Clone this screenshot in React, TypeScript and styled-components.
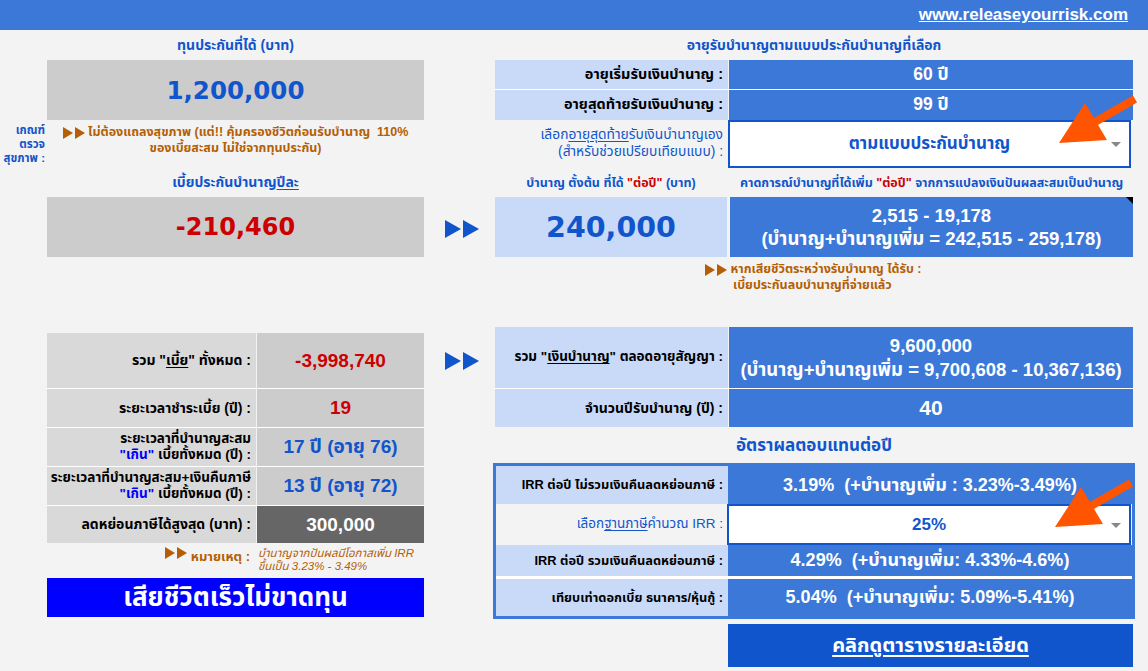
import React from "react";
import styled, { createGlobalStyle } from "styled-components";

const Global = createGlobalStyle`
  html, body { margin: 0; padding: 0; background: #f3f3f3; }
  body { font-family: "Liberation Sans", "Noto Sans Thai", "Noto Sans", Tahoma, sans-serif; }
  * { box-sizing: border-box; }
`;

const NARROW = `"Liberation Sans Narrow", "Liberation Sans", "Noto Sans Thai", "Noto Sans", sans-serif`;

const C = {
  page: "#f3f3f3",
  blue: "#3c78d8",
  light: "#c9daf8",
  ink: "#1155cc",
  red: "#cc0000",
  orange: "#b45f06",
  gray: "#cccccc",
  gray2: "#d9d9d9",
  dark: "#666666",
};

const Page = styled.div`
  position: relative;
  width: 1148px;
  height: 671px;
  overflow: hidden;
  background: ${C.page};
`;

const TopBar = styled.div`
  height: 30px;
  background: ${C.blue};
  display: flex;
  align-items: center;
  justify-content: flex-end;
  padding-right: 20px;
`;

const SiteLink = styled.a`
  color: #fff;
  font-family: ${NARROW};
  font-weight: bold;
  font-size: 17px;
  text-decoration: underline;
`;

const Cols = styled.div<{ $rows?: string }>`
  display: grid;
  grid-template-columns: 47px 377px 71px 638px;
  ${(p) => (p.$rows ? `grid-template-rows: ${p.$rows};` : "")}
`;

const Cell = styled.div<{ $col: string; $row?: string }>`
  grid-column: ${(p) => p.$col};
  ${(p) => (p.$row ? `grid-row: ${p.$row};` : "")}
  min-width: 0;
`;

const Title = styled.div<{ $size?: number }>`
  height: 100%;
  display: flex;
  align-items: flex-end;
  justify-content: center;
  padding-bottom: 4px;
  color: ${C.ink};
  font-weight: bold;
  font-size: ${(p) => p.$size ?? 14}px;
  white-space: nowrap;
  u { text-underline-offset: 2px; }
`;

const BigBox = styled.div<{ $color: string; $bg: string; $size?: number }>`
  height: 100%;
  background: ${(p) => p.$bg};
  color: ${(p) => p.$color};
  display: flex;
  align-items: center;
  justify-content: center;
  font-family: "DejaVu Sans", "Liberation Sans", sans-serif;
  font-weight: bold;
  font-size: ${(p) => p.$size ?? 24.5}px;
`;

const SideLabel = styled.div`
  padding: 3px 2px 0 0;
  text-align: right;
  color: ${C.ink};
  font-size: 11.5px;
  font-weight: bold;
  line-height: 14px;
`;

const Note = styled.div<{ $align?: string }>`
  color: ${C.orange};
  font-size: 12.5px;
  font-weight: bold;
  line-height: 16px;
  text-align: ${(p) => p.$align ?? "center"};
  padding-top: 4px;
`;

const RowTable = styled.div<{ $cols: string; $gap?: number }>`
  display: grid;
  grid-template-columns: ${(p) => p.$cols};
  column-gap: ${(p) => p.$gap ?? 1}px;
`;

const Label = styled.div<{ $h: number; $bg?: string; $color?: string; $size?: number; $line?: boolean; $weight?: string }>`
  height: ${(p) => p.$h}px;
  background: ${(p) => p.$bg ?? C.light};
  color: ${(p) => p.$color ?? "#000"};
  font-family: ${NARROW};
  font-weight: ${(p) => p.$weight ?? "bold"};
  font-size: ${(p) => p.$size ?? 14}px;
  line-height: 1.2;
  white-space: nowrap;
  display: flex;
  align-items: center;
  justify-content: flex-end;
  text-align: right;
  padding-right: 5px;
  border-bottom: ${(p) => (p.$line ? "1px solid #fff" : "none")};
  u { text-underline-offset: 2px; }
`;

const Value = styled.div<{ $h: number; $bg?: string; $color?: string; $size?: number; $line?: boolean; $narrow?: boolean }>`
  position: relative;
  height: ${(p) => p.$h}px;
  background: ${(p) => p.$bg ?? C.blue};
  color: ${(p) => p.$color ?? "#fff"};
  font-family: ${(p) => (p.$narrow ? NARROW : `"Liberation Sans", "Noto Sans Thai", sans-serif`)};
  font-weight: bold;
  font-size: ${(p) => p.$size ?? 17}px;
  line-height: 1.25;
  display: flex;
  flex-direction: column;
  align-items: center;
  justify-content: center;
  text-align: center;
  white-space: nowrap;
  border-bottom: ${(p) => (p.$line ? "1px solid #fff" : "none")};
`;

const CommentMark = styled.span`
  position: absolute;
  top: 0;
  right: 0;
  width: 0;
  height: 0;
  border-top: 7px solid #000;
  border-left: 7px solid transparent;
`;

const Select = styled.div<{ $h: number }>`
  position: relative;
  height: ${(p) => p.$h}px;
  background: #fff;
  border: 2px solid ${C.ink};
  color: ${C.ink};
  font-weight: bold;
  font-size: 17px;
  display: flex;
  align-items: center;
  justify-content: center;
`;

const Caret = styled.span`
  position: absolute;
  right: 8px;
  top: 50%;
  margin-top: -2px;
  width: 0;
  height: 0;
  border-left: 5px solid transparent;
  border-right: 5px solid transparent;
  border-top: 5px solid #888;
`;

const ArrowCol = styled.div<{ $pt: number }>`
  display: flex;
  justify-content: flex-end;
  padding: ${(p) => p.$pt}px 16px 0 0;
`;

const HeaderPair = styled.div`
  height: 100%;
  display: grid;
  grid-template-columns: 232px 403px;
  column-gap: 3px;
`;

const Red = styled.span`
  color: ${C.red};
`;
const Emph = styled.span`
  color: #0000ff;
`;

const LeftStack = styled.div`
  padding-top: 6px;
  display: flex;
  flex-direction: column;
`;

const RightStack = styled.div`
  display: flex;
  flex-direction: column;
`;

const Remark = styled.div`
  height: 35px;
  display: grid;
  grid-template-columns: 209px 168px;
  color: ${C.orange};
  padding-top: 4px;
`;

const RemarkHead = styled.div`
  display: flex;
  justify-content: flex-end;
  align-items: flex-start;
  gap: 4px;
  font-weight: bold;
  font-size: 13px;
  padding-right: 6px;
`;

const RemarkText = styled.div`
  font-style: italic;
  font-size: 11.5px;
  line-height: 13px;
  padding-left: 2px;
`;

const DeathButton = styled.div`
  height: 39px;
  background: #0000ff;
  color: #fff;
  font-weight: bold;
  font-size: 26px;
  display: flex;
  align-items: center;
  justify-content: center;
`;

const IrrBox = styled.div`
  border: 3px solid ${C.blue};
  margin-left: -2px;
  margin-right: -2px;
  display: grid;
  grid-template-columns: 232px 404px;
  background: ${C.page};
`;

const WhiteRule = styled.div`
  grid-column: 1 / -1;
  height: 3px;
  background: #fff;
`;

const DetailButton = styled.div`
  margin: 5px 0 0 233px;
  height: 43px;
  background: ${C.ink};
  color: #fff;
  font-weight: bold;
  font-size: 20px;
  text-decoration: underline;
  text-underline-offset: 3px;
  display: flex;
  align-items: center;
  justify-content: center;
`;

const Overlay = styled.svg<{ $x: number; $y: number }>`
  position: absolute;
  left: ${(p) => p.$x}px;
  top: ${(p) => p.$y}px;
`;

function PlayPair({ color, w, h }: { color: string; w: number; h: number }) {
  return (
    <svg width={w * 2 + 2} height={h} viewBox={`0 0 ${w * 2 + 2} ${h}`} style={{ display: "inline-block", verticalAlign: "middle", flex: "none" }}>
      <polygon points={`0,0 ${w},${h / 2} 0,${h}`} fill={color} />
      <polygon points={`${w + 2},0 ${w * 2 + 2},${h / 2} ${w + 2},${h}`} fill={color} />
    </svg>
  );
}

function OrangeArrow({ x, y }: { x: number; y: number }) {
  return (
    <Overlay $x={x} $y={y} width={90} height={60} viewBox="0 0 90 60">
      <line x1={80} y1={7} x2={40} y2={30} stroke="#ff5500" strokeWidth={8} />
      <polygon points="4,51 30,11 52,48" fill="#ff5500" />
    </Overlay>
  );
}

export default function App() {
  return (
    <Page>
      <Global />
      <TopBar>
        <SiteLink>www.releaseyourrisk.com</SiteLink>
      </TopBar>

      <Cols $rows="30px 60px 50px 27px 60px 40px">
        <Cell $col="2" $row="1">
          <Title>ทุนประกันที่ได้ (บาท)</Title>
        </Cell>
        <Cell $col="4" $row="1">
          <Title>อายุรับบำนาญตามแบบประกันบำนาญที่เลือก</Title>
        </Cell>

        <Cell $col="2" $row="2">
          <BigBox $bg={C.gray} $color={C.ink}>1,200,000</BigBox>
        </Cell>
        <Cell $col="4" $row="2 / 4">
          <RowTable $cols="233px 404px">
            <Label $h={30} $line $size={14.5}>อายุเริ่มรับเงินบำนาญ :</Label>
            <Value $h={30} $line $size={17.5}>60 ปี</Value>
            <Label $h={30} $size={14.5}>อายุสุดท้ายรับเงินบำนาญ :</Label>
            <Value $h={30} $size={17.5}>99 ปี</Value>
          </RowTable>
          <RowTable $cols="233px 403px" $gap={0}>
            <Label $h={48} $bg="transparent" $color={C.ink} $size={13.8} $weight="normal">
              <span>
                เลือก<u>อายุสุดท้าย</u>รับเงินบำนาญเอง
                <br />
                (สำหรับช่วยเปรียบเทียบแบบ) :
              </span>
            </Label>
            <Select $h={48}>
              ตามแบบประกันบำนาญ
              <Caret />
            </Select>
          </RowTable>
        </Cell>

        <Cell $col="1" $row="3">
          <SideLabel>
            เกณฑ์
            <br />
            ตรวจ
            <br />
            สุขภาพ :
          </SideLabel>
        </Cell>
        <Cell $col="2" $row="3">
          <Note>
            <PlayPair color={C.orange} w={10} h={12} /> ไม่ต้องแถลงสุขภาพ (แต่!! คุ้มครองชีวิตก่อนรับบำนาญ&nbsp; 110%
            <br />
            ของเบี้ยสะสม ไม่ใช่จากทุนประกัน)
          </Note>
        </Cell>

        <Cell $col="2" $row="4">
          <Title>
            เบี้ยประกันบำนาญ<u>ปีละ</u>
          </Title>
        </Cell>
        <Cell $col="4" $row="4">
          <HeaderPair>
            <Title $size={12.5}>
              บำนาญ ตั้งต้น ที่ได้&nbsp;<Red>"ต่อปี"</Red>&nbsp;(บาท)
            </Title>
            <Title $size={12.5}>
              คาดการณ์บำนาญที่ได้เพิ่ม&nbsp;<Red>"ต่อปี"</Red>&nbsp;จากการแปลงเงินปันผลสะสมเป็นบำนาญ
            </Title>
          </HeaderPair>
        </Cell>

        <Cell $col="2" $row="5">
          <BigBox $bg={C.gray} $color={C.red} $size={24}>
            -210,460
          </BigBox>
        </Cell>
        <Cell $col="3" $row="5">
          <ArrowCol $pt={23}>
            <PlayPair color={C.ink} w={16} h={18} />
          </ArrowCol>
        </Cell>
        <Cell $col="4" $row="5">
          <HeaderPair>
            <BigBox $bg={C.light} $color={C.ink} $size={28.5}>
              240,000
            </BigBox>
            <Value $h={60} $narrow $size={18.5}>
              <CommentMark />
              <div>2,515 - 19,178</div>
              <div>(บำนาญ+บำนาญเพิ่ม = 242,515 - 259,178)</div>
            </Value>
          </HeaderPair>
        </Cell>

        <Cell $col="4" $row="6">
          <Note $align="left" style={{ paddingLeft: 210, fontSize: 12.5 }}>
            <PlayPair color={C.orange} w={10} h={12} /> หากเสียชีวิตระหว่างรับบำนาญ ได้รับ :
            <br />
            <span style={{ paddingLeft: 28 }}>เบี้ยประกันลบบำนาญที่จ่ายแล้ว</span>
          </Note>
        </Cell>
      </Cols>

      <Cols style={{ marginTop: 30 }}>
        <Cell $col="2">
          <LeftStack>
            <RowTable $cols="209px 167px">
              <Label $h={56} $bg={C.gray2} $line>
                <span>
                  รวม "<u>เบี้ย</u>" ทั้งหมด :
                </span>
              </Label>
              <Value $h={56} $bg={C.gray} $color={C.red} $size={19} $line>
                -3,998,740
              </Value>
              <Label $h={39} $bg={C.gray2} $line>
                ระยะเวลาชำระเบี้ย (ปี) :
              </Label>
              <Value $h={39} $bg={C.gray} $color={C.red} $size={19} $line>
                19
              </Value>
              <Label $h={39} $bg={C.gray2} $line $size={13.5}>
                <span>
                  ระยะเวลาที่บำนาญสะสม
                  <br />
                  <Emph>"เกิน"</Emph> เบี้ยทั้งหมด (ปี) :
                </span>
              </Label>
              <Value $h={39} $bg={C.gray} $color={C.ink} $size={19} $line>
                17 ปี (อายุ 76)
              </Value>
              <Label $h={39} $bg={C.gray2} $line $size={13.5}>
                <span>
                  ระยะเวลาที่บำนาญสะสม+เงินคืนภาษี
                  <br />
                  <Emph>"เกิน"</Emph> เบี้ยทั้งหมด (ปี) :
                </span>
              </Label>
              <Value $h={39} $bg={C.gray} $color={C.ink} $size={19} $line>
                13 ปี (อายุ 72)
              </Value>
              <Label $h={37} $bg={C.gray2}>
                ลดหย่อนภาษีได้สูงสุด (บาท) :
              </Label>
              <Value $h={37} $bg={C.dark} $size={19}>
                300,000
              </Value>
            </RowTable>
            <Remark>
              <RemarkHead>
                <PlayPair color={C.orange} w={10} h={12} />
                หมายเหตุ :
              </RemarkHead>
              <RemarkText>
                บำนาญจากปันผลมีโอกาสเพิ่ม IRR
                <br />
                ขึ้นเป็น 3.23% - 3.49%
              </RemarkText>
            </Remark>
            <DeathButton>เสียชีวิตเร็วไม่ขาดทุน</DeathButton>
          </LeftStack>
        </Cell>

        <Cell $col="3">
          <ArrowCol $pt={25}>
            <PlayPair color={C.ink} w={16} h={18} />
          </ArrowCol>
        </Cell>

        <Cell $col="4">
          <RightStack>
            <RowTable $cols="233px 404px">
              <Label $h={62} $line $size={13.5}>
                <span>
                  รวม "<u>เงินบำนาญ</u>" ตลอดอายุสัญญา :
                </span>
              </Label>
              <Value $h={62} $line $narrow $size={18.5}>
                <div>9,600,000</div>
                <div>(บำนาญ+บำนาญเพิ่ม = 9,700,608 - 10,367,136)</div>
              </Value>
              <Label $h={38} $size={14}>
                จำนวนปีรับบำนาญ (ปี) :
              </Label>
              <Value $h={38} $size={21}>
                40
              </Value>
            </RowTable>
            <div style={{ height: 36 }}>
              <Title $size={17}>อัตราผลตอบแทนต่อปี</Title>
            </div>
            <IrrBox>
              <Label $h={38} $size={12.8}>
                IRR ต่อปี ไม่รวมเงินคืนลดหย่อนภาษี :
              </Label>
              <Value $h={38} $size={18}>
                3.19%&nbsp; (+บำนาญเพิ่ม : 3.23%-3.49%)
              </Value>
              <Label $h={41} $bg="transparent" $color={C.ink} $size={13.5} $weight="normal">
                <span>
                  เลือก<u>ฐานภาษี</u>คำนวณ IRR :
                </span>
              </Label>
              <Select $h={41} style={{ marginLeft: -1, marginRight: 1 }}>
                25%
                <Caret />
              </Select>
              <Label $h={31} $size={12.8}>
                IRR ต่อปี รวมเงินคืนลดหย่อนภาษี :
              </Label>
              <Value $h={31} $size={18}>
                4.29%&nbsp; (+บำนาญเพิ่ม: 4.33%-4.6%)
              </Value>
              <WhiteRule />
              <Label $h={37} $size={12.8}>
                เทียบเท่าดอกเบี้ย ธนาคาร/หุ้นกู้ :
              </Label>
              <Value $h={37} $size={18}>
                5.04%&nbsp; (+บำนาญเพิ่ม: 5.09%-5.41%)
              </Value>
            </IrrBox>
            <DetailButton>คลิกดูตารางรายละเอียด</DetailButton>
          </RightStack>
        </Cell>
      </Cols>

      <OrangeArrow x={1055} y={92} />
      <OrangeArrow x={1051} y={476} />
    </Page>
  );
}
